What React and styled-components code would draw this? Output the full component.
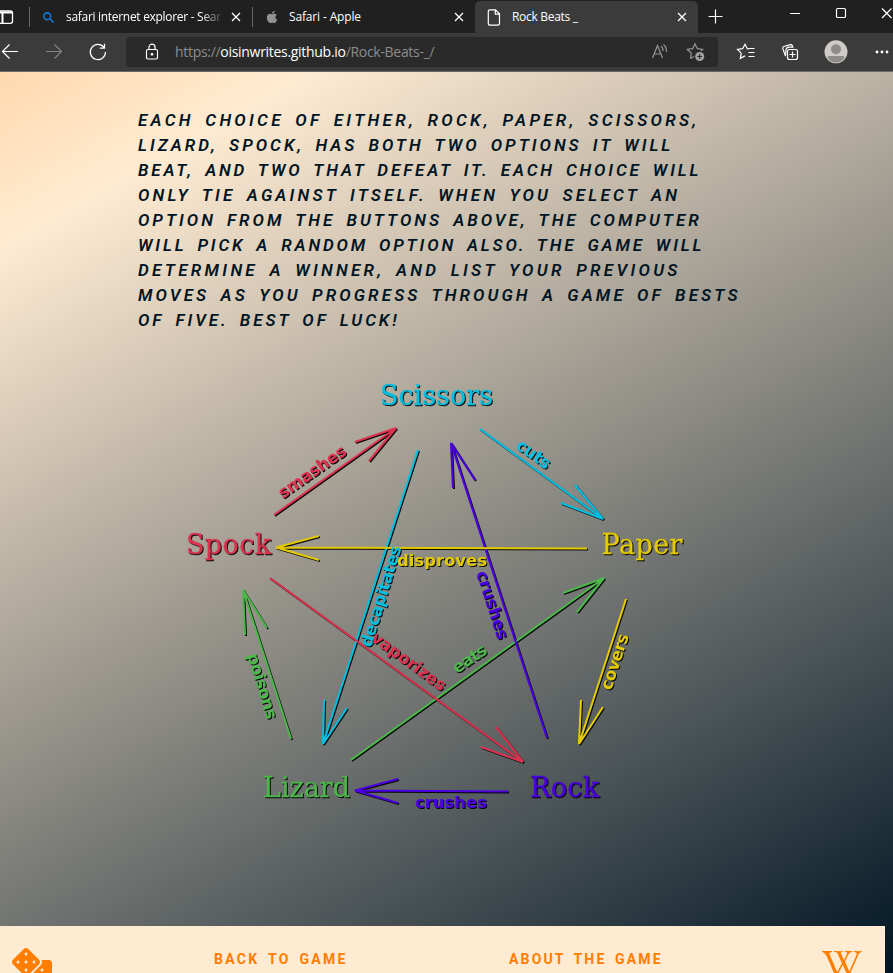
import React from "react";
import styled, { createGlobalStyle } from "styled-components";
import { FaDice, FaWikipediaW, FaApple } from "react-icons/fa";

const GlobalStyle = createGlobalStyle`
  * { box-sizing: border-box; }
  html, body { margin: 0; height: 100%; overflow: hidden; }
`;

const Window = styled.div`
  width: 893px;
  height: 973px;
  overflow: hidden;
  display: flex;
  flex-direction: column;
  font-family: "Open Sans", "Noto Sans", sans-serif;
`;

const TabStrip = styled.div`
  flex: none;
  height: 33px;
  display: flex;
  align-items: stretch;
  background: #202020;
`;

const TabMenu = styled.div`
  width: 29px;
  padding-top: 10px;
  svg { display: block; }
`;

const Tab = styled.div`
  width: ${(p) => p.$width}px;
  display: flex;
  align-items: center;
  padding: ${(p) => (p.$active ? 0 : 1)}px 11px 0 ${(p) => p.$inset}px;
  margin-top: ${(p) => (p.$active ? 1 : 0)}px;
  border-radius: 5px 5px 0 0;
  background: ${(p) => (p.$active ? "#3b3b3b" : "transparent")};
  color: #fff;
  svg { display: block; flex: none; }
`;

const TabDivider = styled.div`
  width: 1px;
  height: 20px;
  margin-top: 7px;
  background: #686868;
`;

const TabTitle = styled.span`
  flex: 1;
  margin-left: ${(p) => p.$gap}px;
  margin-right: ${(p) => p.$end || 0}px;
  white-space: nowrap;
  font-size: 12px;
  line-height: 18px;
  letter-spacing: ${(p) => p.$tracking || 0}px;
  ${(p) => p.$fade && "mask-image: linear-gradient(90deg, #000 86%, transparent 101%);"}
`;

const WindowControls = styled.div`
  flex: 1;
  display: flex;
  svg { display: block; flex: none; }
`;

const Toolbar = styled.div`
  flex: none;
  height: 39px;
  display: flex;
  align-items: center;
  background: #3b3b3b;
  border-bottom: 1px solid #6a6865;
  svg { display: block; flex: none; }
`;

const NavButtons = styled.div`
  width: 126px;
  flex: none;
`;

const AddressBar = styled.div`
  width: 592px;
  height: 30px;
  border-radius: 4px;
  background: #2a2a2a;
  display: flex;
  align-items: center;
  padding: 0 12px 0 18px;
`;

const Url = styled.div`
  flex: 1;
  margin-left: 15px;
  font-size: 14px;
  line-height: 20px;
  letter-spacing: -0.3px;
  color: #8c8c8c;
  b { color: #fff; font-weight: 400; }
`;

const Page = styled.main`
  flex: 1;
  min-height: 0;
  display: flex;
  flex-direction: column;
  background: linear-gradient(150.5deg, #ffd9ae 0%, #ffebd2 12.5%, #001524 100%);
`;

const Rules = styled.p`
  flex: none;
  margin: 36px 0 0 138px;
  color: #001524;
  font: italic 600 17px/25px Roboto, sans-serif;
  text-transform: uppercase;
`;

const RulesLine = styled.span`
  display: block;
  white-space: nowrap;
  letter-spacing: ${(p) => p.$tracking}px;
  word-spacing: 4px;
`;

const Diagram = styled.svg`
  flex: none;
  display: block;
  width: 520px;
  height: 450px;
  margin: 37px 0 106px 180px;
  filter: drop-shadow(1.6px 1.6px 0.6px rgba(0, 0, 0, 0.95));
`;

const Footer = styled.footer`
  flex: none;
  width: 885px;
  height: 100px;
  background: #ffebd2;
  color: #ff7d00;
  display: grid;
  grid-template-columns: 214px 295px 312px 64px;
  align-items: start;
  padding-top: 22px;
  svg { display: block; width: 40px; height: 32px; }
`;

const HomeIcon = styled.a`
  padding-left: 12px;
`;

const WikiIcon = styled.a`
  padding-left: 1px;
`;

const FooterLink = styled.a`
  font: 700 14px/22px Roboto, sans-serif;
  letter-spacing: ${(p) => p.$tracking}px;
  word-spacing: 3px;
  white-space: nowrap;
`;

const rules = [
  ["Each choice of either, rock, paper, scissors,", 3.3],
  ["lizard, spock, has both two options it will", 3],
  ["beat, and two that defeat it. Each choice will", 2.87],
  ["only tie against itself. When you select an", 3.2],
  ["option from the buttons above, the computer", 3],
  ["will pick a random option also. The game will", 2.84],
  ["determine a winner, and list your previous", 3.3],
  ["moves as you progress through a game of bests", 3.12],
  ["of five. Best of luck!", 2.95],
];

const C = { cyan: "#00bfe0", red: "#dc3350", yellow: "#e3ca00", green: "#4cb74b", purple: "#4b00e0" };

const arrows = [
  [C.red, [274, 515], [396, 428], [355, 442], [369, 461]],
  [C.cyan, [480, 429], [603, 519], [575, 485], [561, 503]],
  [C.cyan, [418, 450], [323, 744], [324, 700], [347, 708]],
  [C.green, [351, 760], [604, 578], [563, 593], [577, 612]],
  [C.purple, [547, 738], [451, 443], [453, 488], [475, 480]],
  [C.yellow, [587, 548.5], [276, 547.5], [319, 536], [319, 560]],
  [C.red, [270, 578], [523, 762], [481, 747], [496, 727]],
  [C.yellow, [626, 599], [579, 744], [581, 700], [603, 707]],
  [C.green, [291, 739], [243, 590], [245, 635], [267, 628]],
  [C.purple, [508, 791.5], [355, 790.5], [398, 779], [398, 803]],
];

const names = [
  ["Scissors", C.cyan, 380, 404.5, 113],
  ["Spock", C.red, 186, 554, 85],
  ["Paper", C.yellow, 601.5, 554, 81],
  ["Lizard", C.green, 263, 797, 87],
  ["Rock", C.purple, 530, 797, 69],
];

const verbs = [
  ["smashes", C.red, 283, 499, -35, 79],
  ["cuts", C.cyan, 515, 448, 35, 38],
  ["decapitates", C.cyan, 371, 648, -73, 105],
  ["crushes", C.purple, 476, 573, 72, 71],
  ["disproves", C.yellow, 397, 566, 0, 90],
  ["vaporizes", C.red, 370, 640, 36, 88],
  ["eats", C.green, 457, 674, -34, 38],
  ["covers", C.yellow, 611, 691, -72, 58],
  ["poisons", C.green, 247, 655, 73, 68],
  ["crushes", C.purple, 415, 807.5, 0, 72],
];

function CloseIcon() {
  return (
    <svg width="10" height="10" viewBox="0 0 10 10" stroke="#fff" strokeWidth="1.3">
      <path d="M1 1l8 8M9 1L1 9" />
    </svg>
  );
}

function Tabs() {
  return (
    <TabStrip>
      <TabMenu>
        <svg width="14" height="14" fill="none" stroke="#fff" strokeWidth="1.3">
          <rect x="-3" y="1" width="15.5" height="12.3" rx="2" />
          <path d="M-3 2.5h15M2.5 3v10" strokeWidth="2" />
        </svg>
      </TabMenu>
      <TabDivider />
      <Tab $width={222} $inset={13}>
        <svg width="11" height="11" viewBox="0 0 11 11" fill="none" stroke="#1478d4" strokeWidth="1.6">
          <circle cx="4.3" cy="4.3" r="3.4" />
          <path d="M6.8 6.8l3.7 3.7" />
        </svg>
        <TabTitle $gap={12} $end={8} $fade $tracking={-0.3}>safari internet explorer - Sear</TabTitle>
        <CloseIcon />
      </Tab>
      <TabDivider />
      <Tab $width={222} $inset={12}>
        <FaApple size={14} color="#929292" />
        <TabTitle $gap={10} $tracking={-0.15}>Safari - Apple</TabTitle>
        <CloseIcon />
      </Tab>
      <Tab $width={223} $inset={12} $active>
        <svg width="14" height="17" viewBox="0 0 14 17" fill="none" stroke="#fff" strokeWidth="1.2">
          <path d="M3 .8h5.5l4 4V14.5q0 1.7-1.7 1.7H3Q1.3 16.2 1.3 14.5V2.5Q1.3.8 3 .8zM8.3 1v4.2h4" />
        </svg>
        <TabTitle $gap={11} $tracking={-0.3}>Rock Beats _</TabTitle>
        <CloseIcon />
      </Tab>
      <WindowControls>
        <svg width="195" height="33" viewBox="698 0 195 33" fill="none" stroke="#fff" strokeWidth="1.2">
          <path d="M708.5 16.5h14M715.5 9.5v14M790 13.5h10M882 8.5l9.5 9.5M891.5 8.5l-9.5 9.5" />
          <rect x="836.5" y="8.5" width="9" height="9" rx="1.3" />
        </svg>
      </WindowControls>
    </TabStrip>
  );
}

function BrowserToolbar() {
  return (
    <Toolbar>
      <NavButtons>
        <svg width="126" height="38" viewBox="0 33 126 38" fill="none" stroke="#fff" strokeWidth="1.2">
          <path d="M18 51.5H2.5M9.5 44.5l-7 7 7 7" />
          <path d="M46 51.5h15.5M54.5 44.5l7 7-7 7" stroke="#858585" />
          <path d="M104 47.5a7.6 7.6 0 1 0 1.5 4.5M104.5 43.7v4.5h-4.7" />
        </svg>
      </NavButtons>
      <AddressBar>
        <svg width="16" height="18" viewBox="0 0 16 18" fill="none" stroke="#fff" strokeWidth="1.2">
          <rect x="2.5" y="6.5" width="11" height="9.5" rx="1.5" />
          <path d="M5 6.5V4.2a3 3 0 0 1 6 0v2.3" />
          <circle cx="8" cy="11.3" r=".8" fill="#fff" />
        </svg>
        <Url>
          https://<b>oisinwrites.github.io</b>/Rock-Beats-_/
        </Url>
        <svg width="56" height="24" viewBox="650 40 56 24" fill="none" stroke="#979797" strokeWidth="1.2">
          <path d="M652.5 58l5-12.5 5 12.5M654.2 54h6.6M661 46q2 1.5 2 5M663.5 44.5q3 2.5 3 7.5" />
          <path d="M690.5 58.5l.8-5.2-4-3.8 5.4-.8 2.3-4.8 2.4 4.8 5.2.8-1.5 1.6M690.5 58.5l3.5-2" />
          <circle cx="699.7" cy="56.5" r="4.5" fill="#a3a3a3" stroke="none" />
          <path d="M699.7 54v5M697.2 56.5h5" stroke="#2a2a2a" />
        </svg>
      </AddressBar>
      <svg width="175" height="38" viewBox="718 33 175 38" fill="none" stroke="#fff" strokeWidth="1.2">
        <path d="M749 49l-1.7-.3-2.3-4.5-2.4 4.5-5.1.8 3.7 3.6-.9 5.2 4.7-2.4" />
        <path d="M748.5 48.5h6M748.5 52.5h6M748.5 56.5h6" />
        <rect x="787.5" y="49.5" width="10" height="10" rx="2" />
        <path d="M792.5 51.5v6M789.5 54.5h6M785.5 56l-2.7-7.5q-.4-1.5 1-2l6.5-1.8q1.4-.3 2 1l.5 1.5h-4q-2.6.3-2.8 2.6z" />
        <circle cx="836" cy="51.8" r="11.5" fill="#cfccc8" stroke="none" />
        <circle cx="836" cy="49.2" r="5" fill="#8e8b88" stroke="none" />
        <path d="M827.5 57.5q0-1.5 1.5-1.5h14q1.5 0 1.5 1.5-3 5-8.5 5t-8.5-5z" fill="#8e8b88" stroke="none" />
        <g fill="#fff" stroke="none">
          <circle cx="877" cy="52" r="1.4" />
          <circle cx="882" cy="52" r="1.4" />
          <circle cx="887" cy="52" r="1.4" />
        </g>
      </svg>
    </Toolbar>
  );
}

function RulesDiagram() {
  return (
    <Diagram viewBox="180 370 520 450">
      {arrows.map(([color, from, tip, a, b], i) => (
        <path
          key={i}
          d={`M${from}L${tip}M${a}L${tip}L${b}`}
          stroke={color}
          strokeWidth="2.1"
          fill="none"
          strokeLinejoin="bevel"
        />
      ))}
      <g fontFamily="'DejaVu Serif', serif" fontSize="27" strokeWidth="0.3">
        {names.map(([text, color, x, y, w]) => (
          <text key={text} x={x} y={y} fill={color} stroke={color} textLength={w}>{text}</text>
        ))}
      </g>
      <g fontFamily="'DejaVu Sans', sans-serif" fontSize="16.5" fontWeight="700">
        {verbs.map(([text, color, x, y, angle, w], i) => (
          <text key={i} fill={color} textLength={w} transform={`translate(${x} ${y}) rotate(${angle})`}>
            {text}
          </text>
        ))}
      </g>
    </Diagram>
  );
}

export default function App() {
  return (
    <Window>
      <GlobalStyle />
      <Tabs />
      <BrowserToolbar />
      <Page>
        <Rules>
          {rules.map(([text, tracking]) => (
            <RulesLine key={text} $tracking={tracking}>{text}</RulesLine>
          ))}
        </Rules>
        <RulesDiagram />
        <Footer>
          <HomeIcon><FaDice /></HomeIcon>
          <FooterLink $tracking={2.3}>BACK TO GAME</FooterLink>
          <FooterLink $tracking={2.15}>ABOUT THE GAME</FooterLink>
          <WikiIcon><FaWikipediaW /></WikiIcon>
        </Footer>
      </Page>
    </Window>
  );
}
